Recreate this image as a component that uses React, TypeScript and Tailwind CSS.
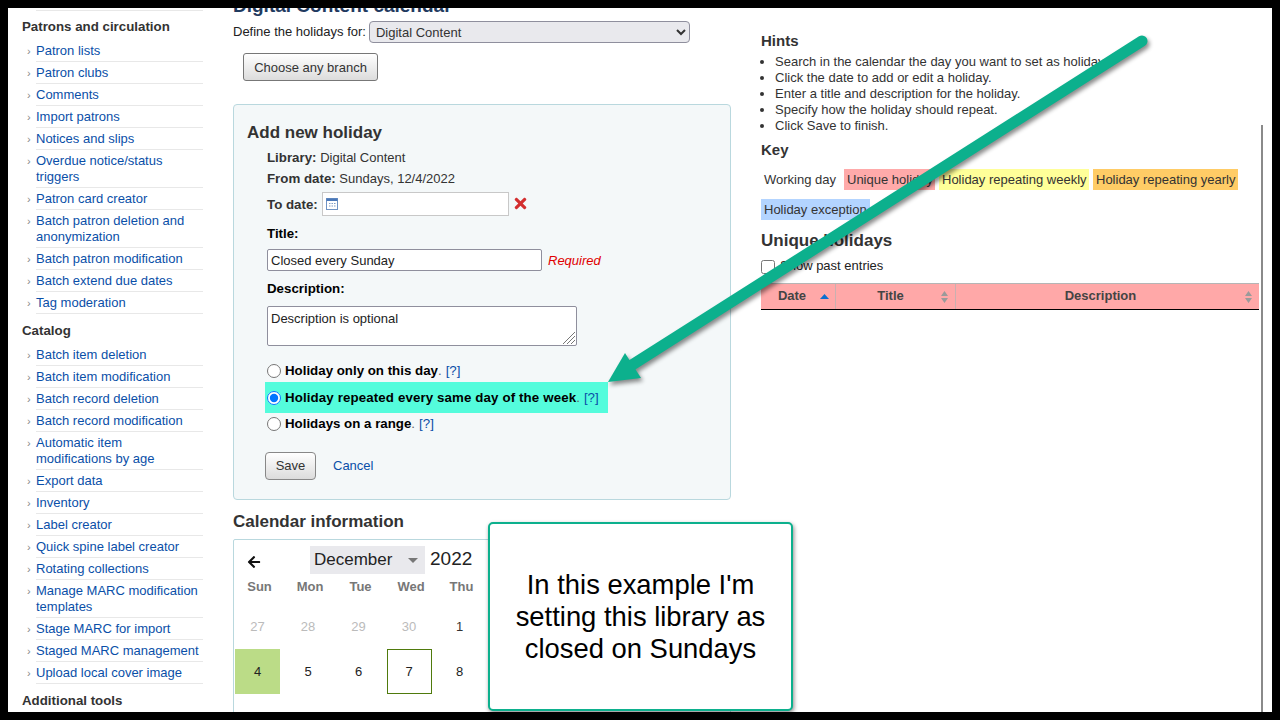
import { FaArrowLeft, FaTimes } from "react-icons/fa";

const sections = [
  {
    title: "Patrons and circulation",
    items: [
      "Patron lists",
      "Patron clubs",
      "Comments",
      "Import patrons",
      "Notices and slips",
      "Overdue notice/status triggers",
      "Patron card creator",
      "Batch patron deletion and anonymization",
      "Batch patron modification",
      "Batch extend due dates",
      "Tag moderation",
    ],
  },
  {
    title: "Catalog",
    items: [
      "Batch item deletion",
      "Batch item modification",
      "Batch record deletion",
      "Batch record modification",
      "Automatic item modifications by age",
      "Export data",
      "Inventory",
      "Label creator",
      "Quick spine label creator",
      "Rotating collections",
      "Manage MARC modification templates",
      "Stage MARC for import",
      "Staged MARC management",
      "Upload local cover image",
    ],
  },
];

const hints = [
  "Search in the calendar the day you want to set as holiday.",
  "Click the date to add or edit a holiday.",
  "Enter a title and description for the holiday.",
  "Specify how the holiday should repeat.",
  "Click Save to finish.",
];

function Sidebar() {
  return (
    <div className="w-[225px] shrink-0 pl-[14px] pt-[2px]">
      <div className="ml-[14px] w-[167px] border-t border-[#e8e8e8]" />
      {sections.map((s) => (
        <div key={s.title} className="mb-[8px]">
          <h5 className="mt-[7px] h-[17px] text-[13.3px] font-bold leading-[17px] text-[#333]">{s.title}</h5>
          <ul className="mt-[5px]">
            {s.items.map((item) => (
              <li key={item} className="relative ml-[14px] w-[167px] border-b border-[#e8e8e8] py-[2.5px] pr-[4px] text-[13px] leading-[16px] text-[#0a4fa8]">
                <span className="absolute left-[-9px] top-[3px] text-[11px] text-[#888]">›</span>
                {item}
              </li>
            ))}
          </ul>
        </div>
      ))}
      <h5 className="mt-[8px] text-[13.3px] font-bold leading-[17px] text-[#333]">Additional tools</h5>
    </div>
  );
}

function SortArrows() {
  return (
    <svg width="9" height="14" viewBox="0 0 9 14" className="absolute right-[6px] top-[6px]">
      <path d="M4.5 1 L8 6 H1 Z M4.5 13 L8 8 H1 Z" fill="#9a9a9a" />
    </svg>
  );
}

function Radio({ label, checked }: { label: string; checked?: boolean }) {
  return (
    <div className="flex h-[27px] items-center whitespace-nowrap text-[13.3px]">
      <input type="radio" name="repeat" defaultChecked={checked} className="mr-[4px] h-[14px] w-[14px] accent-[#0075ff]" />
      <b className={checked ? "tracking-[0.12px] text-black" : "text-black"}>{label}</b>
      <span className="text-[#666]">.</span>
      <span className="ml-[4px] text-[#0a4fa8]">[?]</span>
    </div>
  );
}

function HolidayForm() {
  return (
    <div className="mt-[23px] h-[396px] rounded-[4px] border border-[#b9d8de] bg-[#f4f8f9] pl-[13px] pt-[18px]">
      <h3 className="text-[17px] font-bold leading-[20px] text-[#333]">Add new holiday</h3>
      <div className="ml-[20px] mt-[4px] text-[13px] leading-[21px] text-[#333]">
        <div><b className="text-[13.3px]">Library:</b> Digital Content</div>
        <div><b className="text-[13.3px]">From date:</b> Sundays, 12/4/2022</div>
        <div className="mt-[3px] flex items-center">
          <b className="text-[13.3px]">To date:</b>
          <div className="ml-[4px] flex h-[24px] w-[187px] items-center border border-[#c8c8c8] bg-white pl-[3px]">
            <svg width="12" height="12" viewBox="0 0 12 12">
              <rect x="0.5" y="0.5" width="11" height="11" fill="#fff" stroke="#6f93c4" />
              <rect x="0.5" y="0.5" width="11" height="2.5" fill="#4a78b8" />
              <path d="M3 5h1.5v1H3zM5.5 5H7v1H5.5zM8 5h1.5v1H8zM3 7.5h1.5v1H3zM5.5 7.5H7v1H5.5zM8 7.5h1.5v1H8z" fill="#7c9cc8" />
            </svg>
          </div>
          <FaTimes className="-mt-[2px] ml-[3px] text-[17px] text-[#d32f2f]" />
        </div>
        <div className="mt-[7px] text-[13.3px] font-bold text-black">Title:</div>
        <div className="mt-[5px] flex items-center">
          <div className="flex h-[22px] w-[275px] items-center rounded-[2px] border border-[#8f8f9d] bg-white pl-[3px] text-[#222]">Closed every Sunday</div>
          <i className="ml-[6px] text-[#e00000]">Required</i>
        </div>
        <div className="mt-[7px] text-[13.3px] font-bold text-black">Description:</div>
        <div className="relative mt-[7px] h-[40px] w-[310px] rounded-[2px] border border-[#8f8f9d] bg-white pl-[3px] pt-[1px] text-[#222]">
          Description is optional
          <svg width="14" height="14" viewBox="0 0 14 14" className="absolute bottom-[0px] right-[0px]">
            <path d="M1 13 L13 1 M5 13 L13 5 M9 13 L13 9" stroke="#777" strokeWidth="1" />
          </svg>
        </div>
      </div>
      <div className="ml-[18px] mt-[11px] w-[343px]">
        <div className="pl-[2px]"><Radio label="Holiday only on this day" /></div>
        <div className="-mt-[2px] h-[31px] bg-[#54fcdc] pl-[2px] pt-[2px]"><Radio label="Holiday repeated every same day of the week" checked /></div>
        <div className="-mt-[3px] pl-[2px]"><Radio label="Holidays on a range" /></div>
      </div>
      <div className="ml-[18px] mt-[15px] flex items-center">
        <button className="h-[28px] w-[51px] rounded-[4px] border border-[#888] bg-gradient-to-b from-white to-[#dcdcdc] text-[13px] text-[#333]">Save</button>
        <span className="ml-[17px] text-[13px] text-[#0a4fa8]">Cancel</span>
      </div>
    </div>
  );
}

function Calendar() {
  const prev = ["27", "28", "29", "30"];
  const colClass = "flex h-[45px] w-[45px] items-center justify-center";
  return (
    <div className="mt-[7px] h-[200px] rounded-t-[2px] border border-[#b9d8de] pl-[1px] text-[13px]">
      <div className="relative flex h-[34px] items-end pl-[75px]">
        <FaArrowLeft className="absolute left-[12px] top-[15px] text-[14px] text-[#111]" />
        <div className="relative flex h-[28px] w-[115px] items-center bg-[#e9e9ed] pl-[4px] text-[17px] text-[#222]">
          December
          <span className="absolute right-[7px] top-[12px] h-0 w-0 border-x-[5px] border-t-[5px] border-x-transparent border-t-[#777]" />
        </div>
        <span className="ml-[5px] pb-[1px] text-[19px] leading-[28px] text-[#222]">2022</span>
      </div>
      <div className="mt-[5px] grid grid-cols-[50.5px_50.5px_50.5px_50.5px_50.5px] text-[13px] font-bold text-[#777]">
        {["Sun", "Mon", "Tue", "Wed", "Thu"].map((d) => (
          <div key={d} className="w-[49px] text-center leading-[16px]">{d}</div>
        ))}
      </div>
      <div className="mt-[9px] grid grid-cols-[50.5px_50.5px_50.5px_50.5px_50.5px] text-[13px]">
        {prev.map((d) => (
          <div key={d} className={`${colClass} text-[#bbb]`}>{d}</div>
        ))}
        <div className={`${colClass} text-[#333]`}>1</div>
        <div className={`${colClass} bg-[#bbdc87] text-[#222]`}>4</div>
        <div className={`${colClass} text-[#222]`}>5</div>
        <div className={`${colClass} text-[#222]`}>6</div>
        <div className={`${colClass} border border-[#4f7a0c] text-[#222]`}>7</div>
        <div className={`${colClass} text-[#222]`}>8</div>
      </div>
    </div>
  );
}

function RightColumn() {
  return (
    <div className="ml-[30px] mt-[24px] w-[498px] shrink-0 text-[13px] text-[#333]">
      <h4 className="text-[15px] font-bold leading-[18px]">Hints</h4>
      <ul className="mt-[4px] list-disc pl-[14px] leading-[16px]">
        {hints.map((h) => (
          <li key={h}>{h}</li>
        ))}
      </ul>
      <h4 className="mt-[7px] text-[15px] font-bold leading-[18px]">Key</h4>
      <div className="mt-[10px] flex h-[21px] items-center whitespace-nowrap leading-[21px]">
        <span className="w-[83px] pl-[3px]">Working day</span>
        <span className="w-[91px] bg-[#ffaaaa] pl-[3px]">Unique holiday</span>
        <span className="ml-[4px] w-[150px] bg-[#ffff99] pl-[3px]">Holiday repeating weekly</span>
        <span className="ml-[4px] w-[145px] bg-[#ffcc66] pl-[3px]">Holiday repeating yearly</span>
      </div>
      <div className="mt-[9px] h-[21px] w-[109px] whitespace-nowrap bg-[#b3d4ff] pl-[3px] leading-[21px]">Holiday exception</div>
      <h3 className="mt-[11px] text-[17px] font-bold leading-[20px]">Unique holidays</h3>
      <label className="mt-[9px] flex h-[14px] items-center text-[#222]">
        <input type="checkbox" className="mr-[5px] h-[14px] w-[14px]" />
        <span className="-mt-[2px]">Show past entries</span>
      </label>
      <div className="mt-[9px] flex h-[27px] border-y border-b-black border-t-[#b5b5b5] bg-[#ffa8a8] text-[13px] font-bold leading-[24px] text-[#444]">
        <div className="relative w-[75px] border-r border-[#c9b0b0] pr-[12px] text-center">
          Date
          <svg width="9" height="5" viewBox="0 0 9 5" className="absolute right-[6px] top-[10px]">
            <path d="M4.5 0 L9 5 H0 Z" fill="#0a6fd0" />
          </svg>
        </div>
        <div className="relative w-[120px] border-r border-[#c9b0b0] pr-[10px] text-center">Title<SortArrows /></div>
        <div className="relative flex-1 pr-[14px] text-center">Description<SortArrows /></div>
      </div>
    </div>
  );
}

export default function App() {
  return (
    <div className="h-[720px] w-[1280px] overflow-hidden bg-black p-2 font-['Liberation_Sans',Arial,sans-serif]">
      <div className="relative flex h-[704px] w-[1264px] overflow-hidden bg-white">
        <Sidebar />
        <div className="-mt-[12px] w-[498px] shrink-0">
          <h2 className="h-[20px] text-[19px] font-bold leading-[20px] text-[#1f3a5f]">Digital Content calendar</h2>
          <div className="mt-[5px] flex items-center text-[13px] text-[#222]">
            <span>Define the holidays for:</span>
            <select className="ml-[3px] h-[22px] w-[321px] rounded-[4px] border border-[#8f8f9d] bg-[#e9e9ed] pl-[2px] text-[13px] text-[#333]">
              <option>Digital Content</option>
            </select>
          </div>
          <button className="ml-[10px] mt-[10px] h-[28px] w-[135px] rounded-[3px] border border-[#777] bg-gradient-to-b from-white to-[#dcdcdc] pt-[1px] text-[13px] text-[#333]">
            Choose any branch
          </button>
          <HolidayForm />
          <h3 className="mt-[12px] text-[17px] font-bold leading-[20px] text-[#333]">Calendar information</h3>
          <Calendar />
        </div>
        <RightColumn />

        {/* scrollbar edge */}
        <div className="absolute bottom-0 left-[1253px] top-[117px] w-[2px] bg-[#8a8a8a]" />

        {/* annotation arrow */}
        <svg width="1264" height="704" viewBox="0 0 1264 704" className="pointer-events-none absolute left-0 top-0 drop-shadow-[2px_3px_2px_rgba(0,0,0,0.45)]">
          <line x1="1134" y1="33" x2="624" y2="357" stroke="#0cb08d" strokeWidth="11" strokeLinecap="round" />
          <path d="M600 374 L617 345 L633 370 Z" fill="#0cb08d" />
        </svg>

        {/* callout */}
        <div className="absolute left-[480px] top-[514px] flex h-[189px] w-[305px] items-center justify-center rounded-[5px] border-2 border-[#0cb08d] bg-white text-center text-[27.4px] leading-[32px] text-black shadow-[1px_2px_4px_rgba(0,0,0,0.45)]">
          <p>In this example I'm<br />setting this library as<br />closed on Sundays</p>
        </div>
      </div>
    </div>
  );
}
